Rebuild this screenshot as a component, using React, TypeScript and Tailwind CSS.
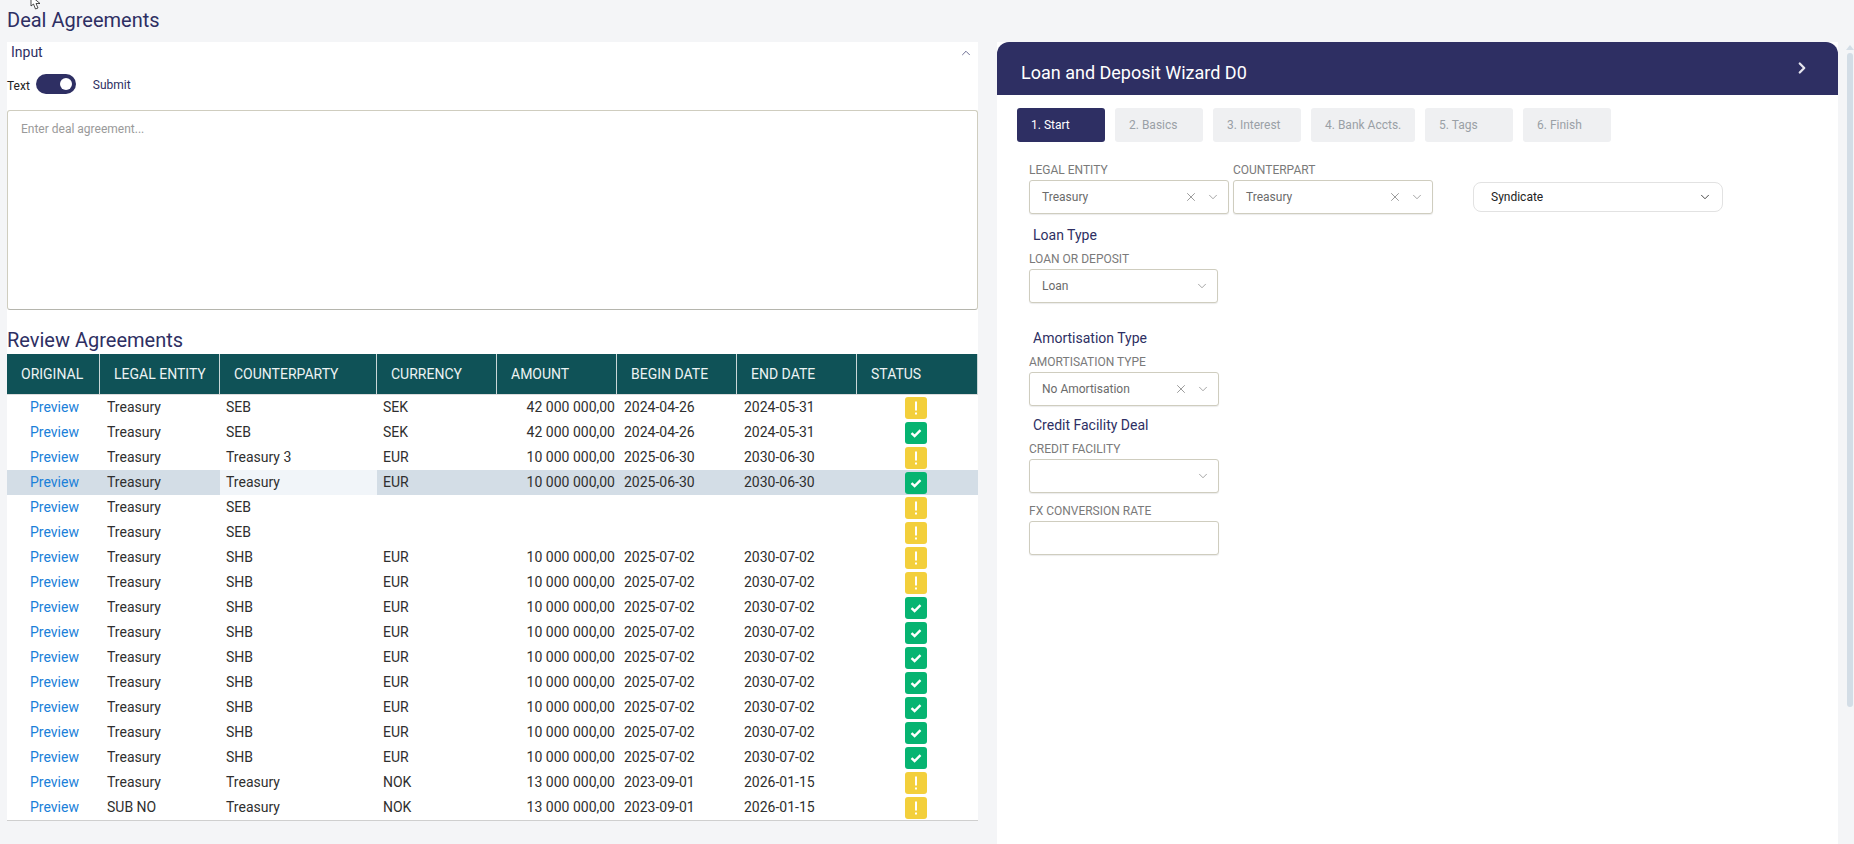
import { ChevronDown, ChevronRight, ChevronUp, X } from "lucide-react";

const rows = [
  ["Treasury", "SEB", "SEK", "42 000 000,00", "2024-04-26", "2024-05-31", "warn"],
  ["Treasury", "SEB", "SEK", "42 000 000,00", "2024-04-26", "2024-05-31", "ok"],
  ["Treasury", "Treasury 3", "EUR", "10 000 000,00", "2025-06-30", "2030-06-30", "warn"],
  ["Treasury", "Treasury", "EUR", "10 000 000,00", "2025-06-30", "2030-06-30", "ok"],
  ["Treasury", "SEB", "", "", "", "", "warn"],
  ["Treasury", "SEB", "", "", "", "", "warn"],
  ["Treasury", "SHB", "EUR", "10 000 000,00", "2025-07-02", "2030-07-02", "warn"],
  ["Treasury", "SHB", "EUR", "10 000 000,00", "2025-07-02", "2030-07-02", "warn"],
  ["Treasury", "SHB", "EUR", "10 000 000,00", "2025-07-02", "2030-07-02", "ok"],
  ["Treasury", "SHB", "EUR", "10 000 000,00", "2025-07-02", "2030-07-02", "ok"],
  ["Treasury", "SHB", "EUR", "10 000 000,00", "2025-07-02", "2030-07-02", "ok"],
  ["Treasury", "SHB", "EUR", "10 000 000,00", "2025-07-02", "2030-07-02", "ok"],
  ["Treasury", "SHB", "EUR", "10 000 000,00", "2025-07-02", "2030-07-02", "ok"],
  ["Treasury", "SHB", "EUR", "10 000 000,00", "2025-07-02", "2030-07-02", "ok"],
  ["Treasury", "SHB", "EUR", "10 000 000,00", "2025-07-02", "2030-07-02", "ok"],
  ["Treasury", "Treasury", "NOK", "13 000 000,00", "2023-09-01", "2026-01-15", "warn"],
  ["SUB NO", "Treasury", "NOK", "13 000 000,00", "2023-09-01", "2026-01-15", "warn"],
];

const columns = [
  { label: "ORIGINAL", width: "w-[93px]" },
  { label: "LEGAL ENTITY", width: "w-[120px]" },
  { label: "COUNTERPARTY", width: "w-[157px]" },
  { label: "CURRENCY", width: "w-[120px]" },
  { label: "AMOUNT", width: "w-[120px]" },
  { label: "BEGIN DATE", width: "w-[120px]" },
  { label: "END DATE", width: "w-[120px]" },
  { label: "STATUS", width: "w-[121px]" },
];

const tabs = [
  { label: "1. Start", width: "w-[88px]", active: true },
  { label: "2. Basics", width: "w-[88px]" },
  { label: "3. Interest", width: "w-[88px]" },
  { label: "4. Bank Accts.", width: "w-[104px]" },
  { label: "5. Tags", width: "w-[88px]" },
  { label: "6. Finish", width: "w-[88px]" },
];

const StatusIcon = ({ status }: { status: string }) =>
  status === "ok" ? (
    <div className="flex h-[22px] w-[22px] items-center justify-center rounded-[3px] bg-[#06b471]">
      <svg width="14" height="14" viewBox="0 0 14 14">
        <path d="M2.5 7.2 5.6 10 11.5 4.2" fill="none" stroke="white" strokeWidth="2.4" />
      </svg>
    </div>
  ) : (
    <div className="flex h-[22px] w-[22px] items-center justify-center rounded-[3px] bg-[#f3cf3b]">
      <svg width="14" height="16" viewBox="0 0 14 16">
        <path d="M7 1.5V10.5" stroke="white" strokeWidth="2" />
        <path d="M7 12.5V14.5" stroke="white" strokeWidth="2" />
      </svg>
    </div>
  );

const Field = ({
  label,
  value,
  width,
  clearable,
  textInput,
}: {
  label: string;
  value?: string;
  width: string;
  clearable?: boolean;
  textInput?: boolean;
}) => (
  <div className={width}>
    <div className="h-[12px] text-[12px] leading-[12px] text-[#7a7a7a]">{label}</div>
    <div className="mt-[4px] flex h-[34px] items-center rounded-[3px] border border-[#cfcdbf] bg-white pl-[12px] pr-[8px] text-[12px] text-[#6b6b6b] shadow-[0_1px_1px_rgba(0,0,0,0.08)]">
      <span className="flex-1">{value}</span>
      {clearable && <X size={14} strokeWidth={1} className="mr-[8px] text-[#555]" />}
      {!textInput && <ChevronDown size={14} strokeWidth={1} className="text-[#666]" />}
    </div>
  </div>
);

const SectionTitle = ({ children }: { children: string }) => (
  <div className="pl-[4px] text-[14px] leading-[16px] text-[#2e2f63]">{children}</div>
);

const Cursor = () => (
  <svg className="absolute left-[30px] top-0" width="14" height="10" viewBox="0 0 14 10">
    <path d="M1 -4V6L3.5 4 5.5 9 8 8 6 3.5H10Z" fill="white" stroke="#222" strokeWidth="0.8" />
  </svg>
);

export default function App() {
  return (
    <div className="relative flex h-[844px] w-full overflow-hidden bg-[#f4f5f7] font-['Roboto',sans-serif]">
      <Cursor />
      <div className="ml-[7px] w-[971px]">
        <h1 className="flex h-[42px] items-center pb-[2px] text-[20px] text-[#2e2f63]">Deal Agreements</h1>
        <div className="bg-white">
          <div className="flex h-[21px] items-center justify-between pl-[4px] pr-[3px] text-[14px] text-[#2e2f63]">
            <span>Input</span>
            <ChevronUp size={14} strokeWidth={1.2} className="mr-[2px]" />
          </div>
          <div className="flex h-[47px] items-start pt-[11px] text-[12px]">
            <span className="mt-[3px] text-[#222]">Text</span>
            <div className="ml-[6px] flex h-[20px] w-[40px] items-center justify-end rounded-full bg-[#2e2f63] pr-[4px]">
              <div className="h-[12px] w-[12px] rounded-full bg-white" />
            </div>
            <span className="ml-[17px] mt-[2px] text-[#2e2f63]">Submit</span>
          </div>
          <div className="h-[200px] rounded-[3px] border border-[#cfcdbf] border-b-[#b5b5ad] px-[13px] py-[9px] text-[12px] text-[#9a9a9a]">
            Enter deal agreement...
          </div>
          <h2 className="flex h-[44px] items-end pb-[2px] text-[20px] leading-[24px] text-[#2e2f63]">Review Agreements</h2>
          <div className="flex h-[41px] border-b border-[#dcdcdc] bg-[#0f5257] text-[14px] text-[#ecf3f3]">
            {columns.map((col) => (
              <div key={col.label} className={`${col.width} flex items-center border-r border-[#c9d6d7] pl-[14px]`}>
                {col.label}
              </div>
            ))}
          </div>
          {rows.map((row, i) => {
            const selected = i === 3;
            return (
              <div
                key={i}
                className={`flex h-[25px] items-center text-[14px] text-[#2f2f2f] ${selected ? "bg-[#d3dde6]" : ""}`}
              >
                <div className="w-[93px] pl-[23px] text-[#1a80d9]">Preview</div>
                <div className="w-[120px] pl-[7px]">{row[0]}</div>
                <div className={`flex h-full w-[157px] items-center pl-[6px] ${selected ? "bg-[#f1f5f9]" : ""}`}>{row[1]}</div>
                <div className="w-[120px] pl-[6px]">{row[2]}</div>
                <div className="w-[120px] pr-[2px] text-right">{row[3]}</div>
                <div className="w-[120px] pl-[7px]">{row[4]}</div>
                <div className="w-[120px] pl-[7px]">{row[5]}</div>
                <div className="flex w-[121px] justify-center pr-[3px]">
                  <StatusIcon status={row[6]} />
                </div>
              </div>
            );
          })}
          <div className="border-b border-[#cfcfcf]" />
        </div>
      </div>

      <div className="ml-[19px] mt-[42px] flex w-[841px] flex-col bg-white">
        <div className="flex h-[53px] items-start justify-between rounded-t-[12px] bg-[#2e2f63] pl-[24px] pr-[27px] text-white">
          <span className="mt-[20px] text-[18px] leading-[22px]">Loan and Deposit Wizard D0</span>
          <ChevronRight size={18} strokeWidth={3} className="mt-[17px] text-[#e6e6ee]" />
        </div>
        <div className="ml-[20px] mt-[13px] flex gap-[10px]">
          {tabs.map((tab) => (
            <div
              key={tab.label}
              className={`${tab.width} flex h-[34px] items-center rounded-[3px] pl-[14px] text-[12px] ${
                tab.active ? "bg-[#2e2f63] text-white" : "bg-[#eff0f2] text-[#9aa0a6]"
              }`}
            >
              {tab.label}
            </div>
          ))}
        </div>
        <div className="ml-[32px] mt-[22px]">
          <div className="flex items-end">
            <Field label="LEGAL ENTITY" value="Treasury" width="w-[200px]" clearable />
            <div className="w-[4px]" />
            <Field label="COUNTERPART" value="Treasury" width="w-[200px]" clearable />
            <div className="mb-[2px] ml-[40px] flex h-[30px] w-[250px] items-center justify-between rounded-[8px] border border-[#e2e2e2] pl-[17px] pr-[10px] text-[12px] text-[#222]">
              Syndicate
              <ChevronDown size={14} strokeWidth={1.4} />
            </div>
          </div>
          <div className="mt-[13px]"><SectionTitle>Loan Type</SectionTitle></div>
          <div className="mt-[10px]"><Field label="LOAN OR DEPOSIT" value="Loan" width="w-[189px]" /></div>
          <div className="mt-[27px]"><SectionTitle>Amortisation Type</SectionTitle></div>
          <div className="mt-[10px]"><Field label="AMORTISATION TYPE" value="No Amortisation" width="w-[190px]" clearable /></div>
          <div className="mt-[11px]"><SectionTitle>Credit Facility Deal</SectionTitle></div>
          <div className="mt-[10px]"><Field label="CREDIT FACILITY" width="w-[190px]" /></div>
          <div className="mt-[12px]"><Field label="FX CONVERSION RATE" width="w-[190px]" textInput /></div>
        </div>
      </div>

      <div className="absolute right-0 top-[42px] h-[802px] w-[8px]">
        <div className="mx-auto mt-[3px] h-0 w-0 border-x-[4px] border-b-[5px] border-x-transparent border-b-[#d3dde6]" />
        <div className="ml-[1px] mt-[3px] h-[654px] w-[6px] rounded-[3px] bg-[#d3dde6]" />
      </div>
    </div>
  );
}
